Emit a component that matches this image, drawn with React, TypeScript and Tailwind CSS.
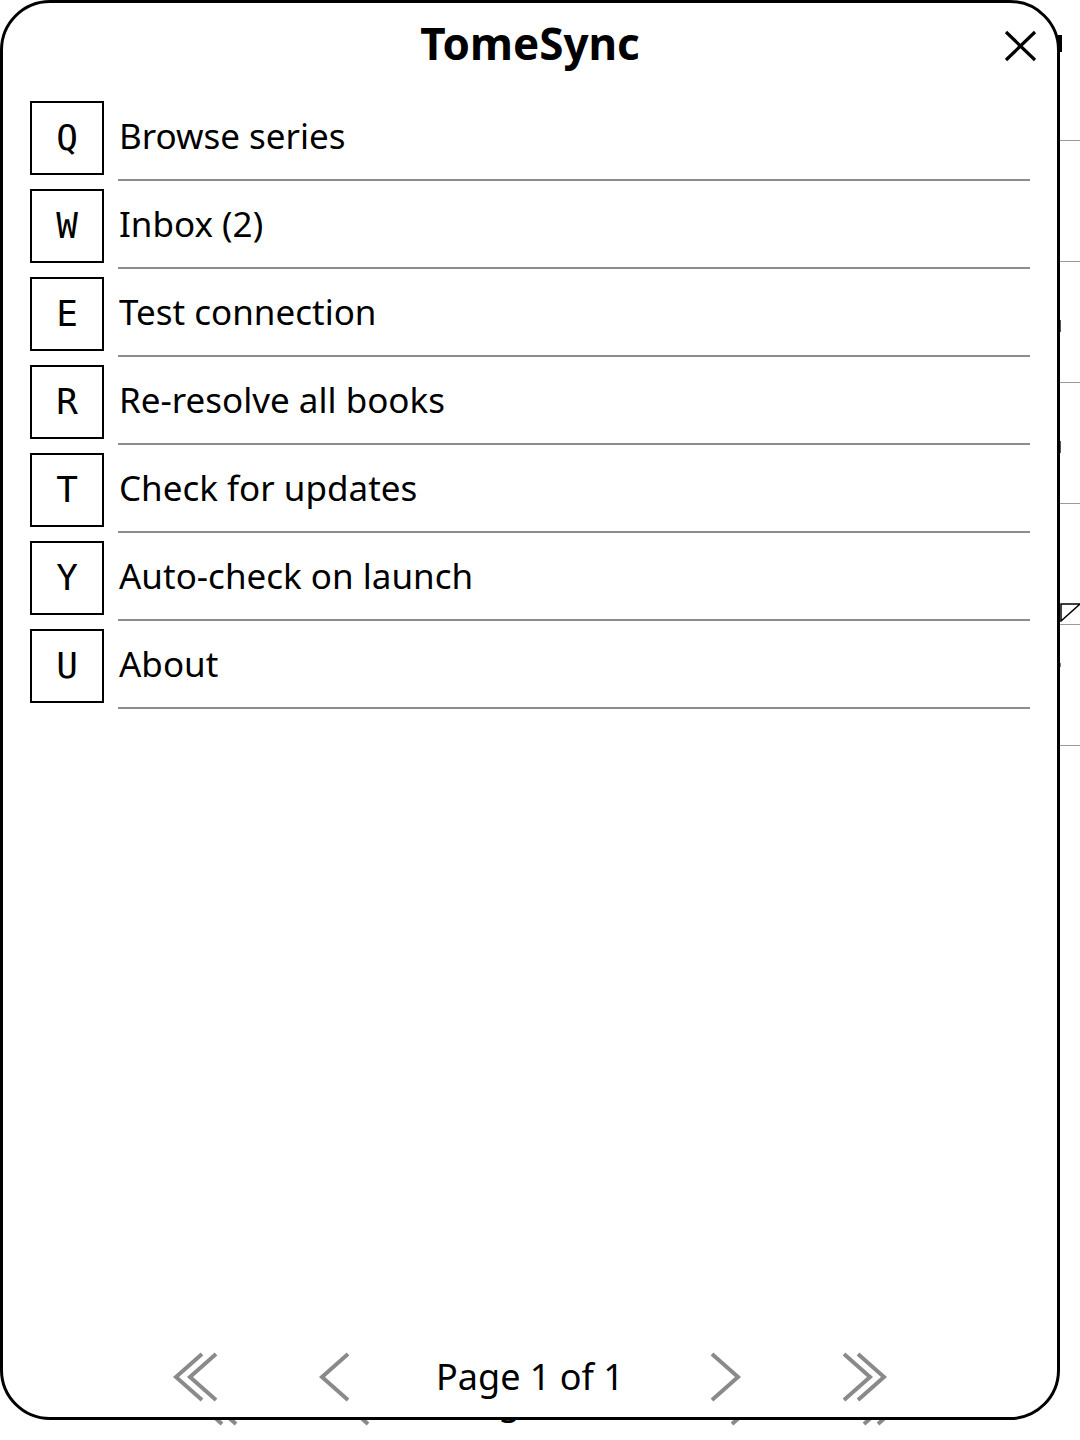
import type { ReactNode } from 'react';

const MENU_ITEMS = [
  { key: 'Q', label: 'Browse series' },
  { key: 'W', label: 'Inbox (2)' },
  { key: 'E', label: 'Test connection' },
  { key: 'R', label: 'Re-resolve all books' },
  { key: 'T', label: 'Check for updates' },
  { key: 'Y', label: 'Auto-check on launch' },
  { key: 'U', label: 'About' },
];

const Chevron = ({ dir, double }: { dir: 'left' | 'right'; double?: boolean }) => {
  const w = double ? 48 : 34;
  const lines = double ? [0, 14] : [0];
  return (
    <svg width={w} height="50" viewBox={`0 0 ${w} 50`} fill="none" stroke="#8a8a8a" strokeWidth="4">
      <g transform={dir === 'right' ? `translate(${w} 0) scale(-1 1)` : undefined}>
        {lines.map((dx) => (
          <polyline key={dx} points={`${30 + dx},2 ${4 + dx},25 ${30 + dx},48`} />
        ))}
      </g>
    </svg>
  );
};

const NavButton = ({ children }: { children: ReactNode }) => (
  <button type="button" className="flex h-[60px] w-[60px] items-center justify-center">
    {children}
  </button>
);

const Pagination = ({ label }: { label: string }) => (
  <div className="flex h-[60px] items-center justify-center">
    <NavButton>
      <Chevron dir="left" double />
    </NavButton>
    <div className="w-[79px]" />
    <NavButton>
      <Chevron dir="left" />
    </NavButton>
    <div className="flex w-[330px] items-center justify-center text-[36px] text-black">{label}</div>
    <NavButton>
      <Chevron dir="right" />
    </NavButton>
    <div className="w-[79px]" />
    <NavButton>
      <Chevron dir="right" double />
    </NavButton>
  </div>
);

// List screen that sits behind the menu dialog
const LibraryPage = () => (
  <div className="flex h-[1440px] flex-col">
    <div className="flex h-[141px] justify-end border-b border-[#9a9a9a] pr-[18px] pt-[35px]">
      <div className="h-[17px] w-[4px] bg-black" />
    </div>
    <div className="flex h-[121px] border-b border-[#9a9a9a]" />
    <div className="flex h-[121px] items-center justify-end border-b border-[#9a9a9a] pr-[19px]">
      <div className="mt-[8px] h-[12px] w-[2px] bg-[#555]" />
    </div>
    <div className="flex h-[121px] items-center justify-end border-b border-[#9a9a9a] pr-[19px]">
      <div className="mt-[8px] h-[12px] w-[2px] bg-[#555]" />
    </div>
    <div className="flex h-[121px] items-end justify-end border-b border-[#9a9a9a]">
      <div className="mb-[24px] mr-[1px] flex flex-col gap-[5px]">
        <div className="h-[3px] w-[2px] bg-[#333]" />
        <div className="h-[3px] w-[2px] bg-[#333]" />
      </div>
      <svg width="20" height="19" viewBox="0 0 20 19" fill="none" stroke="black" strokeWidth="1.5" className="mb-[2px]">
        <polygon points="1,1 20,1 1,18" />
      </svg>
    </div>
    <div className="flex h-[121px] items-start justify-end border-b border-[#9a9a9a] pr-[19px] pt-[38px]">
      <div className="h-[4px] w-[2px] bg-[#777]" />
    </div>
    <div className="flex-1" />
    <div className="mb-[9px] pl-[20px]">
      <Pagination label="Page 1 of 1" />
    </div>
  </div>
);

const App = () => {
  return (
    <div className="relative h-[1440px] w-[1080px] overflow-hidden bg-white font-['Noto_Sans',sans-serif] text-black">
      <LibraryPage />

      {/* Menu dialog */}
      <div className="absolute left-0 top-0 flex h-[1420px] w-[1060px] flex-col rounded-[50px] border-[3px] border-black bg-white">
        <div className="grid h-[90px] grid-cols-[1fr_auto_1fr] items-center">
          <div />
          <h1 className="mb-[10px] text-[44px] font-bold leading-none">TomeSync</h1>
          <div className="flex justify-end pb-[4px] pr-[20px]">
            <svg width="33" height="32" viewBox="0 0 33 32" stroke="black" strokeWidth="3.2">
              <line x1="2" y1="2" x2="31" y2="30" />
              <line x1="31" y1="2" x2="2" y2="30" />
            </svg>
          </div>
        </div>

        <div className="flex flex-col px-[27px]">
          {MENU_ITEMS.map((item) => (
            <div key={item.key} className="flex h-[88px]">
              <div className="mt-[8px] flex h-[74px] w-[74px] items-center justify-center border-2 border-black font-['DejaVu_Sans_Mono',monospace] text-[36px]">
                {item.key}
              </div>
              <div className="ml-[14px] flex h-[88px] flex-1 items-center border-b-2 border-[#8c8c8c] pl-[1px] text-[35px]">
                {item.label}
              </div>
            </div>
          ))}
        </div>

        <div className="flex-1" />
        <div className="mb-[10px]">
          <Pagination label="Page 1 of 1" />
        </div>
      </div>
    </div>
  );
};

export default App;
